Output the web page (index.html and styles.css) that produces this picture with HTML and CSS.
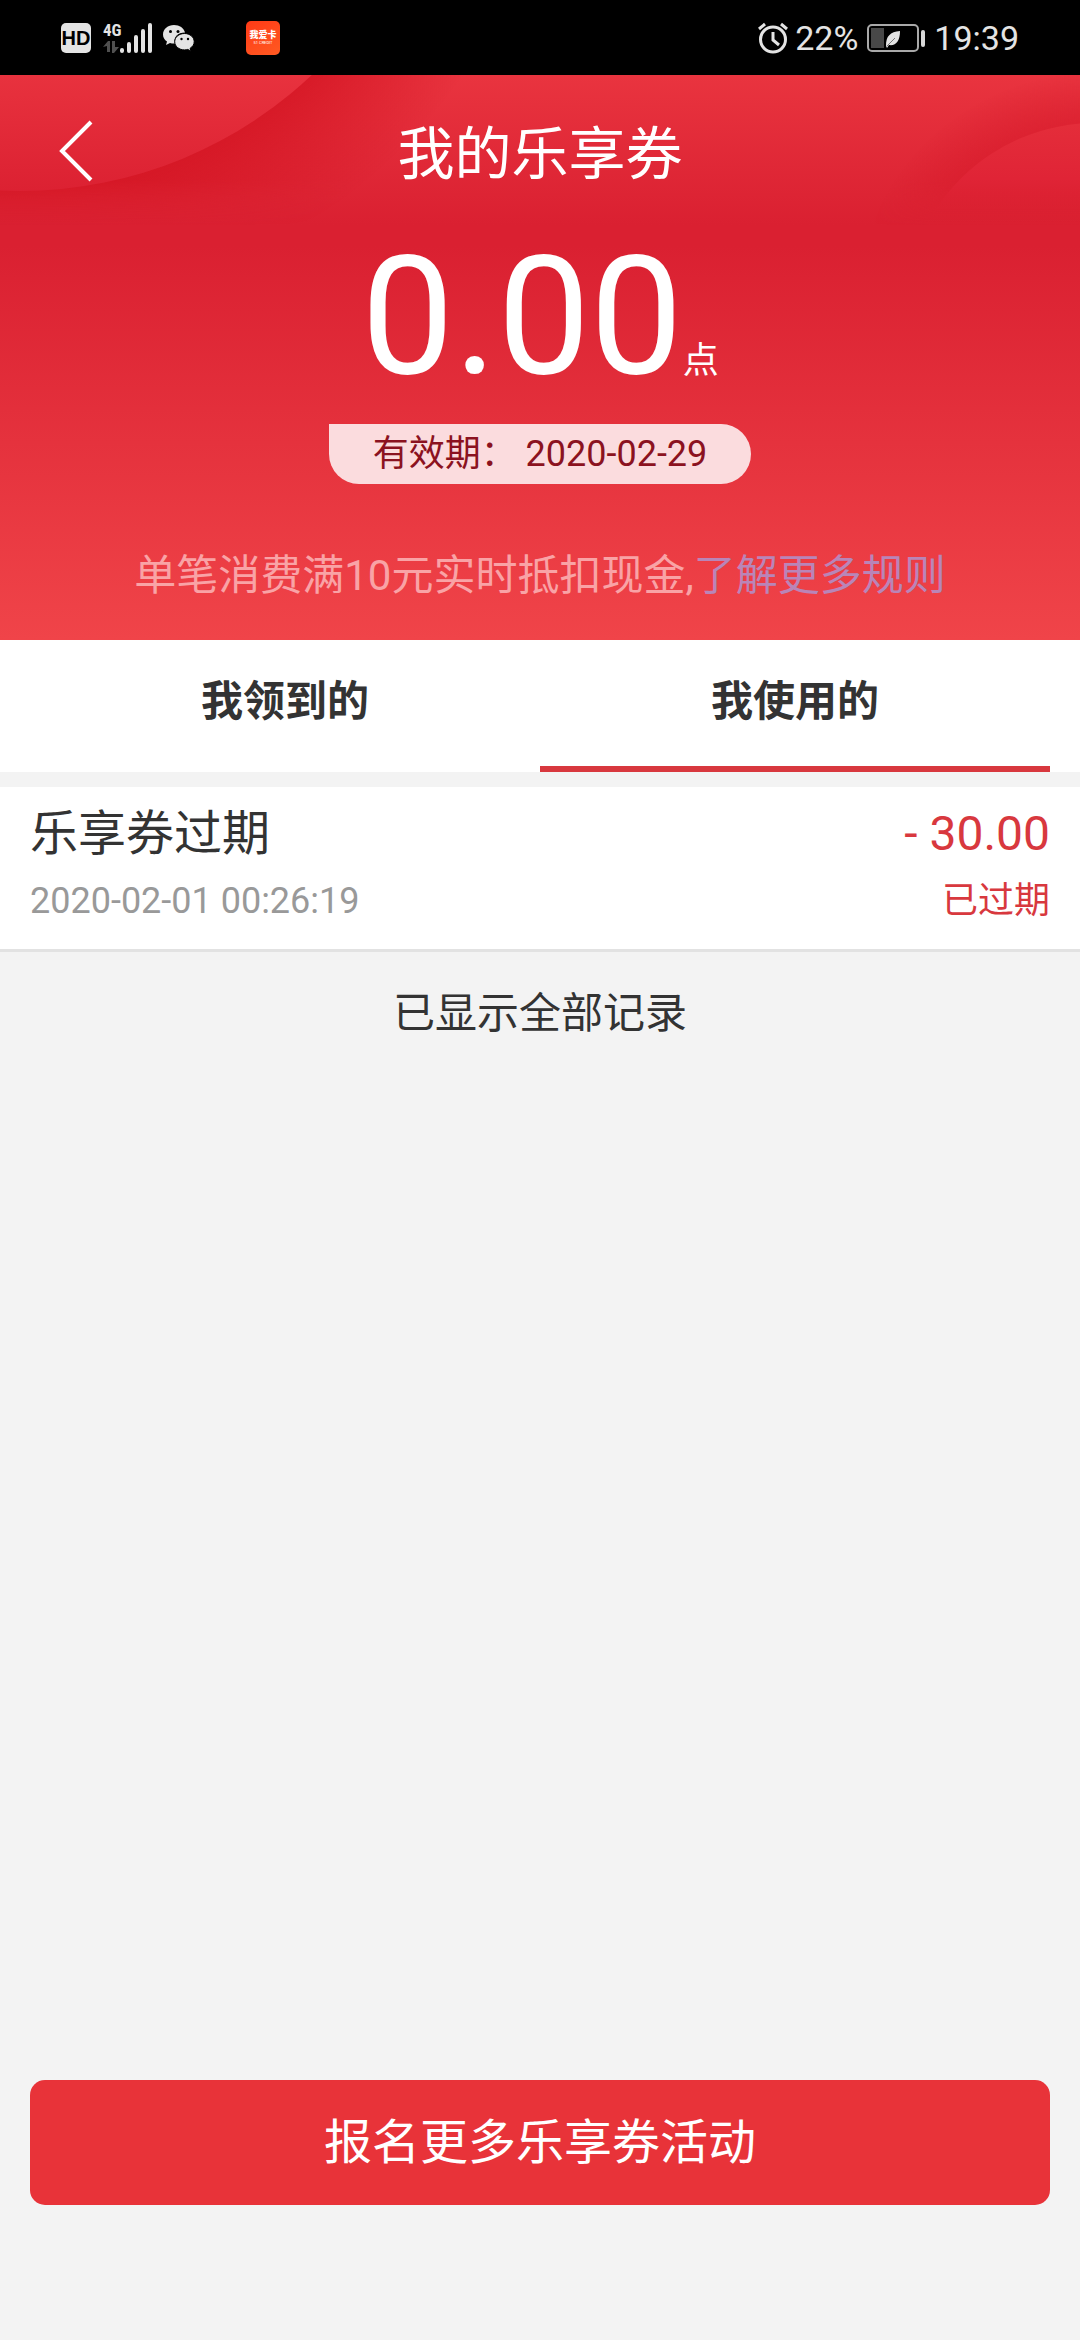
FILE: index.html
```html
<!DOCTYPE html>
<html lang="zh-CN">
<head>
<meta charset="utf-8">
<meta name="viewport" content="width=device-width, initial-scale=1">
<title>我的乐享券</title>
<link rel="stylesheet" href="styles.css">
</head>
<body>
<div class="status-bar">
  <div class="status-left">
    <span class="hd">HD</span>
    <svg class="signal" width="50" height="44" viewBox="0 -6 50 44" aria-hidden="true">
      <text x="0" y="14" class="signal-label">4G</text>
      <path d="M0 25l5-6h2v11H4v-6zM9 19h3v6h4l-5 6H9z" fill="#505050"/>
      <g stroke="#e4e4e4" stroke-width="4" stroke-linecap="round">
        <path d="M19 28v1M26 22v7M33 15v14M40 9v20M47 3v26"/>
      </g>
    </svg>
    <svg class="wechat" width="32" height="28" viewBox="0 0 32 28" aria-hidden="true">
      <path fill="#e4e4e4" d="M11 1C5 1 0 5 0 10.500c0 3 1.600 5.400 4 7.100L3 21l4-2c1.300.4 2.600.5 4 .5h1C10 13 15 8.500 22 8.500 21 4 16.500 1 11 1z"/>
      <path fill="#e4e4e4" stroke="#000" stroke-width="1" d="M21.500 9.500c-5.500 0-9.800 3.600-9.800 8.200s4.300 8.200 9.800 8.200c1.200 0 2.300-.2 3.300-.5l3.200 1.800-.9-2.900c2.500-1.500 4.100-3.900 4.100-6.600 0-4.600-4.300-8.200-9.700-8.200z"/>
      <g fill="#000"><circle cx="7.500" cy="7.500" r="1.500"/><circle cx="15" cy="7.500" r="1.500"/><circle cx="18.500" cy="15" r="1.200"/><circle cx="25" cy="15" r="1.200"/></g>
    </svg>
    <span class="app-badge"><b>我爱卡</b><small>51 CREDIT</small></span>
  </div>
  <div class="status-right">
    <svg class="alarm" width="32" height="32" viewBox="0 0 32 32" fill="none" stroke="#e4e4e4" aria-hidden="true">
      <circle cx="16" cy="17.500" r="12.500" stroke-width="3"/>
      <path d="M16 10v8l6 5" stroke-width="3"/>
      <path d="M2 7l6-5M30 7l-6-5" stroke-width="3"/>
    </svg>
    <span class="battery-text">22%</span>
    <svg class="battery" width="58" height="28" viewBox="0 0 58 28" aria-hidden="true">
      <rect x="1" y="1" width="50" height="26" rx="4" fill="none" stroke="#a9a9a9" stroke-width="2"/>
      <rect x="4" y="4" width="13" height="20" fill="#484848"/>
      <path d="M19 22c0-10 4-14 14-15 0 10-4 15-11 14l-2 3z" fill="#e4e4e4"/>
      <path d="M20 22l8-8" stroke="#777" stroke-width="1"/>
      <rect x="54" y="6" width="4" height="17" rx="2" fill="#d8d8d8"/>
    </svg>
    <time class="clock">19:39</time>
  </div>
</div>

<header class="hero">
  <svg class="hero-art" viewBox="0 0 1080 150" preserveAspectRatio="none" aria-hidden="true">
    <defs>
      <radialGradient id="shadow-left" gradientUnits="userSpaceOnUse" cx="20" cy="-309" r="540">
        <stop offset=".78" stop-color="#d31422" stop-opacity=".8"/>
        <stop offset="1" stop-color="#d31422" stop-opacity="0"/>
      </radialGradient>
      <linearGradient id="disc" x1="0" y1="0" x2="0" y2="116" gradientUnits="userSpaceOnUse">
        <stop offset="0" stop-color="#e8323e"/>
        <stop offset="1" stop-color="#dc2132"/>
      </linearGradient>
      <radialGradient id="shadow-right" gradientUnits="userSpaceOnUse" cx="1095" cy="238" r="240">
        <stop offset=".79" stop-color="#d81c2c" stop-opacity=".6"/>
        <stop offset="1" stop-color="#d81c2c" stop-opacity="0"/>
      </radialGradient>
      <linearGradient id="disc-right" x1="0" y1="50" x2="0" y2="140" gradientUnits="userSpaceOnUse">
        <stop offset="0" stop-color="#e42d3a"/>
        <stop offset=".6" stop-color="#e02436"/>
        <stop offset="1" stop-color="#dc2132" stop-opacity="0"/>
      </linearGradient>
      <linearGradient id="fade" x1="0" y1="0" x2="0" y2="150" gradientUnits="userSpaceOnUse">
        <stop offset=".7" stop-color="#fff"/>
        <stop offset="1" stop-color="#000"/>
      </linearGradient>
      <mask id="fade-mask"><rect width="1080" height="150" fill="url(#fade)"/></mask>
    </defs>
    <g mask="url(#fade-mask)">
      <rect width="1080" height="150" fill="url(#shadow-left)"/>
      <rect width="1080" height="150" fill="url(#shadow-right)"/>
    </g>
    <circle cx="20" cy="-309" r="425" fill="url(#disc)"/>
    <circle cx="1095" cy="238" r="190" fill="url(#disc-right)"/>
  </svg>
  <nav class="nav">
    <button class="back" type="button" aria-label="返回">
      <svg width="36" height="64" viewBox="0 0 36 64" fill="none" stroke="#fff" stroke-width="4" aria-hidden="true"><path d="M33 3L4 32l29 29"/></svg>
    </button>
    <h1 class="title">我的乐享券</h1>
  </nav>
  <p class="balance"><span class="amount">0.00</span><span class="unit">点</span></p>
  <p class="expiry">有效期： 2020-02-29</p>
  <p class="rule">单笔消费满10元实时抵扣现金,<a class="rule-link" href="#rules">了解更多规则</a></p>
</header>

<div class="tabs" role="tablist">
  <button class="tab" type="button" role="tab" aria-selected="false">我领到的</button>
  <button class="tab tab-active" type="button" role="tab" aria-selected="true">我使用的</button>
</div>

<main class="content">
  <ul class="records">
    <li class="record">
      <div class="row"><span class="name">乐享券过期</span><span class="value">- 30.00</span></div>
      <div class="row"><time class="date">2020-02-01 00:26:19</time><span class="state">已过期</span></div>
    </li>
  </ul>
  <p class="end">已显示全部记录</p>
</main>

<footer class="footer">
  <button class="cta" type="button">报名更多乐享券活动</button>
</footer>
</body>
</html>
```
FILE: styles.css
```css
* {
  box-sizing: border-box;
  margin: 0;
  padding: 0;
}

body {
  display: flex;
  flex-direction: column;
  min-height: 100vh;
  background: #f3f3f3;
  color: #333;
  font-family: Roboto, "Noto Sans CJK SC", sans-serif;
  font-size: 42px;
}

button {
  border: 0;
  background: none;
  color: inherit;
  font: inherit;
}

/* Status bar */
.status-bar {
  display: flex;
  justify-content: space-between;
  align-items: center;
  height: 75px;
  padding: 0 61px;
  background: #000;
  color: #e4e4e4;
}

.status-left,
.status-right {
  display: flex;
  align-items: center;
}

.hd {
  width: 30px;
  border-radius: 5px;
  background: #e4e4e4;
  color: #000;
  font: bold 20px/30px "Liberation Sans", sans-serif;
  text-align: center;
}

.signal {
  margin: 0 10px 0 12px;
}

.signal-label {
  fill: #e4e4e4;
  font: bold 17px "Liberation Sans Narrow", "Roboto Condensed", Roboto, sans-serif;
}

.app-badge {
  display: flex;
  flex-direction: column;
  justify-content: center;
  width: 34px;
  height: 34px;
  margin-left: 51px;
  border-radius: 5px;
  background: linear-gradient(150deg, #ff3a16, #ff5a22);
  color: #fff;
  text-align: center;
}

.app-badge b {
  font-size: 9px;
  font-weight: 900;
  line-height: 10px;
}

.app-badge small {
  font-size: 4px;
  line-height: 6px;
}

.battery-text,
.clock {
  font-size: 34px;
  line-height: 40px;
}

.battery-text {
  margin: 0 9px 0 6px;
}

.clock {
  margin-left: 9px;
}

/* Red header */
.hero {
  position: relative;
  display: flex;
  flex-direction: column;
  align-items: center;
  padding-bottom: 34px;
  background: linear-gradient(#e9343f 0, #da2031 150px, #da2031 170px, #f04449 100%);
  color: #fff;
}

.hero-art {
  position: absolute;
  top: 0;
  left: 0;
  width: 100%;
  height: 150px;
}

.nav {
  position: relative;
  display: grid;
  grid-template-columns: 150px 1fr 150px;
  align-items: center;
  width: 100%;
  height: 150px;
  padding-top: 2px;
}

.back {
  display: flex;
  padding-left: 58px;
}

.title {
  padding-top: 8px;
  font-size: 57px;
  font-weight: 400;
  line-height: 80px;
  text-align: center;
}

.balance {
  position: relative;
  display: flex;
  align-items: baseline;
}

.amount {
  font-size: 165px;
  line-height: 184px;
}

.unit {
  font-size: 36px;
  line-height: 60px;
}

.expiry {
  margin-top: 15px;
  padding: 0 44px;
  border-radius: 0 30px 30px 30px;
  background: #fbdcde;
  color: #8b1220;
  font-size: 36px;
  line-height: 60px;
  white-space: pre;
}

.rule {
  margin-top: 62px;
  color: #f9a3a6;
  line-height: 60px;
}

.rule-link {
  color: #b985b8;
  text-decoration: none;
}

/* Tabs */
.tabs {
  display: flex;
  padding: 0 30px;
  background: #fff;
}

.tab {
  flex: 1;
  height: 132px;
  padding-bottom: 12px;
  border-bottom: 6px solid transparent;
  font-weight: 700;
}

.tab-active {
  border-bottom-color: #d8383e;
}

/* Records */
.content {
  flex: 1;
  padding-top: 15px;
}

.records {
  list-style: none;
}

.record {
  display: grid;
  gap: 3px;
  padding: 14px 30px 15px;
  border-bottom: 3px solid #e2e2e2;
  background: #fff;
}

.row {
  display: flex;
  justify-content: space-between;
  align-items: center;
  line-height: 65px;
}

.name,
.value {
  font-size: 48px;
}

.date,
.state {
  font-size: 36px;
}

.date {
  color: #999;
}

.value,
.state {
  color: #d8383e;
}

.end {
  padding-top: 32px;
  line-height: 60px;
  text-align: center;
}

.footer {
  padding: 0 30px 135px;
}

.cta {
  display: block;
  width: 100%;
  height: 125px;
  padding-bottom: 10px;
  border-radius: 15px;
  background: #e83339;
  color: #fff;
  font-size: 48px;
}
```
